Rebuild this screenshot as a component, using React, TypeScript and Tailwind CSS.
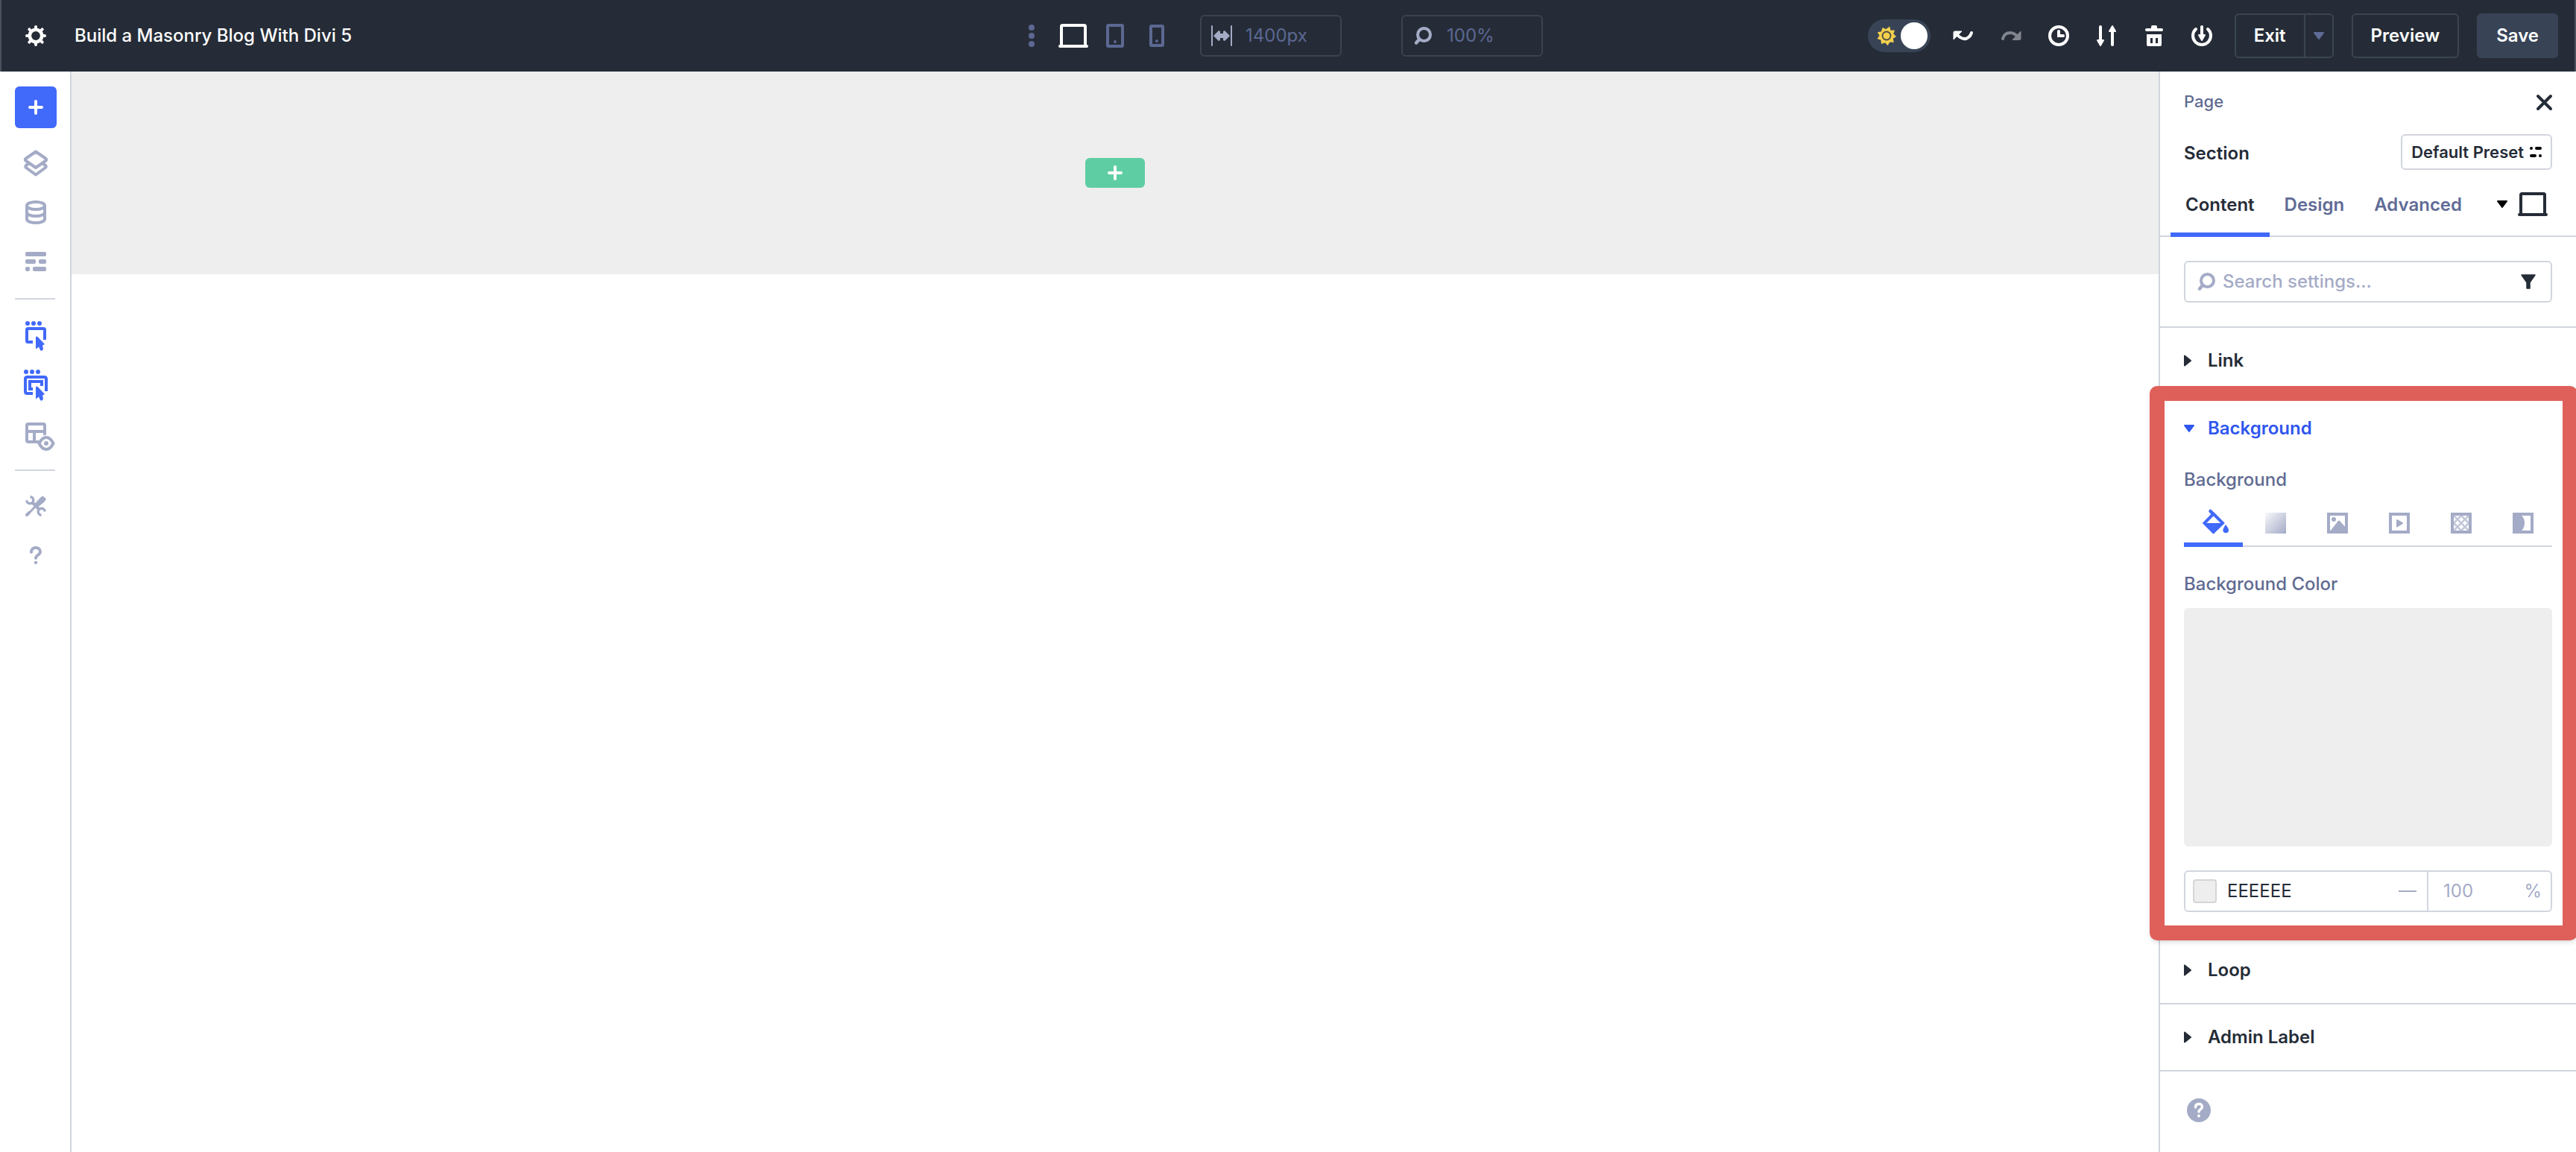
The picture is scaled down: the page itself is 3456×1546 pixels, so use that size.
import { ReactNode, useState } from "react";

interface IIconProps {
  w: number;
  h: number;
  className?: string;
  children: ReactNode;
}

const Icon = ({ w, h, className = "", children }: IIconProps) => (
  <svg
    width={w}
    height={h}
    viewBox={`0 0 ${w} ${h}`}
    fill="none"
    className={`shrink-0 overflow-visible ${className}`}
    aria-hidden="true"
  >
    {children}
  </svg>
);

const PlusIcon = () => (
  <Icon w={20} h={20}>
    <path d="M10 2v16M2 10h16" stroke="currentColor" strokeWidth="4" strokeLinecap="round" />
  </Icon>
);

const GearIcon = () => (
  <Icon w={28} h={28}>
    <circle cx="14" cy="14" r="8.2" stroke="currentColor" strokeWidth="4.6" />
    <path
      d="M14 2v3M14 23v3M2 14h3M23 14h3M5.3 5.3l2 2M20.7 20.7l2 2M5.3 22.7l2-2M20.7 7.3l2-2"
      stroke="currentColor"
      strokeWidth="4"
      strokeLinecap="round"
    />
  </Icon>
);

const LaptopIcon = () => (
  <Icon w={40} h={32}>
    <path d="M4 29V3.500Q4 2 5.500 2h29Q36 2 36 3.500V29" stroke="currentColor" strokeWidth="4" />
    <path d="M2 30h36" stroke="currentColor" strokeWidth="4" strokeLinecap="round" />
  </Icon>
);

const SearchIcon = () => (
  <Icon w={24} h={26}>
    <circle cx="13.500" cy="11.500" r="8.500" stroke="currentColor" strokeWidth="4" />
    <path d="M7 18l-4 4.500" stroke="currentColor" strokeWidth="4.500" strokeLinecap="round" />
  </Icon>
);

const CaretDown = () => (
  <Icon w={14} h={10}>
    <path d="M1 1h12L7 9z" fill="currentColor" stroke="currentColor" strokeWidth="2" strokeLinejoin="round" />
  </Icon>
);

const CaretRight = () => (
  <Icon w={10} h={16}>
    <path d="M1 1.500v13L9 8z" fill="currentColor" stroke="currentColor" strokeWidth="2" strokeLinejoin="round" />
  </Icon>
);

const LayersIcon = () => (
  <Icon w={32} h={36}>
    <path d="M16 2.500L29 11.500Q31.500 13 29 15L16 24 3 15Q.500 13 3 11.500z" stroke="currentColor" strokeWidth="4" strokeLinejoin="round" />
    <path d="M8 17.500l-5 3.500Q1.500 22.500 3 24l13 9.500L29 24Q30.500 22.500 29 21l-5-3.500" stroke="currentColor" strokeWidth="4" strokeLinejoin="round" />
  </Icon>
);

const DatabaseIcon = () => (
  <Icon w={28} h={32}>
    <ellipse cx="14" cy="7" rx="12" ry="5" stroke="currentColor" strokeWidth="4" />
    <path d="M2 7v18c0 3 5.500 5 12 5s12-2 12-5V7M2 16c0 3 5.500 5 12 5s12-2 12-5" stroke="currentColor" strokeWidth="4" />
  </Icon>
);

const RowsIcon = () => (
  <Icon w={28} h={26}>
    <g fill="currentColor">
      <rect width="28" height="6" rx="2" />
      <rect y="10" width="14" height="6" rx="2" />
      <rect x="18" y="10" width="10" height="6" rx="2" />
      <rect y="20" width="6" height="6" rx="2" />
      <rect x="10" y="20" width="18" height="6" rx="2" />
    </g>
  </Icon>
);

const SelectIcon = () => (
  <Icon w={28} h={40}>
    <g fill="currentColor">
      <circle cx="3" cy="3" r="3" />
      <circle cx="11" cy="3" r="3" />
      <circle cx="19" cy="3" r="3" />
      <path d="M14 22c0-1.800 1.500-2 2.500-1L26 31l-3 1.500 1 5q-2 3.500-4 1.500l-2-4.500-4 3z" />
    </g>
    <path d="M10 28H3.500Q2 28 2 26.500v-15Q2 10 3.500 10h21Q26 10 26 11.500V25" stroke="currentColor" strokeWidth="4" />
  </Icon>
);

const MultiSelectIcon = () => (
  <Icon w={32} h={42}>
    <g fill="currentColor">
      <circle cx="3" cy="3" r="3" />
      <circle cx="11" cy="3" r="3" />
      <circle cx="19" cy="3" r="3" />
      <path d="M16 24c0-1.800 1.500-2 2.500-1L28 33l-3 1.500 1 5q-2 3.500-4 1.500l-2-4.500-4 3z" />
    </g>
    <path d="M12 32H4.500Q2 32 2 29.500v-17Q2 10 4.500 10h23Q30 10 30 12.500V29" stroke="currentColor" strokeWidth="4" />
    <path d="M12 26H8V16h16v6" stroke="currentColor" strokeWidth="4" />
  </Icon>
);

const WireframeIcon = () => (
  <Icon w={28} h={32}>
    <path d="M18 26H4Q2 26 2 24V4Q2 2 4 2h20Q26 2 26 4v13M2 12h24M12 12v14" stroke="currentColor" strokeWidth="4" />
    <path d="M18.500 28q4-8 9.500-8t9.500 8q-4 8-9.500 8t-9.500-8z" fill="#fff" stroke="currentColor" strokeWidth="4" strokeLinejoin="round" />
    <circle cx="28" cy="28" r="3" fill="currentColor" />
  </Icon>
);

const ToolsIcon = () => (
  <Icon w={28} h={28}>
    <path d="M23.500 .500L28 4.500 26 8 16.500 16 12 11.500 20.500 2.500z" fill="currentColor" />
    <path d="M14 14L3 25.500" stroke="currentColor" strokeWidth="3" strokeLinecap="round" />
    <path d="M5 23l-3 3" stroke="currentColor" strokeWidth="4" strokeLinecap="round" />
    <path d="M9 9l10 10" stroke="currentColor" strokeWidth="4" />
    <path d="M6.500 1.800a4.500 4.500 0 1 1-4.700 4.700M21.500 26.200a4.500 4.500 0 1 1 4.700-4.700" stroke="currentColor" strokeWidth="3.400" />
  </Icon>
);

const QuestionIcon = () => (
  <Icon w={16} h={24}>
    <path d="M2 8c0-4 2.800-6 6-6s6 2.200 6 5.500c0 4-6 4.500-6 8.500" stroke="currentColor" strokeWidth="4" strokeLinecap="round" />
    <circle cx="8" cy="22" r="2.200" fill="currentColor" />
  </Icon>
);

const SunIcon = () => (
  <Icon w={26} h={26}>
    <path
      d="M13 3.500L17.300 .500 18.500 5.800 24 5.500 22.300 10.600 26 14 21.800 16.800 22.800 22 17.500 21.600 14.500 26 11 22.200 6 24 5.500 18.800 .500 17 3.500 12.700 .800 8.200 6 7.300 7.500 2 12 4z"
      fill="#f3d04e"
    />
    <circle cx="13" cy="13" r="5.500" stroke="#4a4c42" strokeWidth="1.800" />
  </Icon>
);

const ToolbarButton = ({ label, children }: { label: string; children: ReactNode }) => (
  <button className="w-8 h-8 flex items-center justify-center" aria-label={label}>
    {children}
  </button>
);

const SideButton = ({
  label,
  active = false,
  children,
}: {
  label: string;
  active?: boolean;
  children: ReactNode;
}) => (
  <button
    className={`w-full h-[66px] flex items-center justify-center ${
      active ? "text-[#4169fa]" : "text-[#a4abc6]"
    }`}
    aria-label={label}
  >
    {children}
  </button>
);

const Header = () => (
  <header className="h-24 grid grid-cols-[1fr_auto_1fr] items-center px-[22px] bg-[#252c37] border-x-2 border-[#4b525e] text-white">
    <div className="flex items-center gap-[38px] pl-2.5">
      <button aria-label="Settings">
        <GearIcon />
      </button>
      <h1 className="text-2xl font-medium">Build a Masonry Blog With Divi 5</h1>
    </div>

    <div className="flex items-center text-[#5c6892] pr-1.5">
      <button className="mr-8" aria-label="More views">
        <Icon w={8} h={26}>
          <g fill="currentColor">
            <circle cx="4" cy="2" r="4" />
            <circle cx="4" cy="13" r="4" />
            <circle cx="4" cy="24" r="4" />
          </g>
        </Icon>
      </button>
      <button className="mr-6 text-white" aria-label="Desktop">
        <LaptopIcon />
      </button>
      <button className="mr-[34px]" aria-label="Tablet">
        <Icon w={24} h={32}>
          <rect x="2" y="2" width="20" height="28" rx="1" stroke="currentColor" strokeWidth="4" />
          <circle cx="12" cy="24" r="2" fill="currentColor" />
        </Icon>
      </button>
      <button className="mr-12" aria-label="Phone">
        <Icon w={20} h={30}>
          <rect x="2" y="2" width="16" height="26" rx="1" stroke="currentColor" strokeWidth="4" />
          <circle cx="10" cy="22" r="2" fill="currentColor" />
        </Icon>
      </button>
      <label className="w-[190px] h-14 mr-20 flex items-center gap-[18px] pl-[13px] border-2 border-[#3b4350] rounded-md">
        <Icon w={28} h={28} className="text-[#a4abc6]">
          <path d="M1 1v26M27 1v26" stroke="currentColor" strokeWidth="2" strokeLinecap="round" />
          <path d="M3 14l7-7 2 1v3h4V8l2-1 7 7-7 7-2-1v-3h-4v3l-2 1z" fill="currentColor" />
        </Icon>
        <input className="w-full min-w-0 text-2xl outline-none" defaultValue="1400px" aria-label="Canvas width" />
      </label>
      <label className="w-[190px] h-14 flex items-center gap-5 pl-[15px] border-2 border-[#3b4350] rounded-md">
        <span className="text-[#a4abc6]">
          <SearchIcon />
        </span>
        <input className="w-full min-w-0 text-2xl outline-none" defaultValue="100%" aria-label="Zoom" />
      </label>
    </div>

    <div className="flex items-center justify-end gap-7">
      <button
        className="w-[84px] h-11 flex items-center justify-between pl-3 pr-1 rounded-full bg-[#384456]"
        role="switch"
        aria-checked="true"
        aria-label="Light mode"
      >
        <SunIcon />
        <span className="w-9 h-9 rounded-full bg-white" />
      </button>
      <div className="flex items-center gap-8">
        <ToolbarButton label="Undo">
          <Icon w={28} h={14}>
            <path d="M4 4q10 11 17 5 3-2 4-6" stroke="currentColor" strokeWidth="4" strokeLinecap="round" />
            <path d="M1 12V2.500Q1 1 2.500 1H12L1 12z" fill="currentColor" stroke="currentColor" strokeWidth="1" strokeLinejoin="round" />
          </Icon>
        </ToolbarButton>
        <ToolbarButton label="Redo">
          <Icon w={28} h={14} className="text-[#81858e]">
            <path d="M3 11q2-8 10-8 6 0 10 6" stroke="currentColor" strokeWidth="4" strokeLinecap="round" />
            <path d="M27 1v10q0 1.500-1.500 1.500H16L27 1z" fill="currentColor" stroke="currentColor" strokeWidth="1" strokeLinejoin="round" />
          </Icon>
        </ToolbarButton>
        <ToolbarButton label="History">
          <Icon w={28} h={28}>
            <circle cx="14" cy="14" r="12" stroke="currentColor" strokeWidth="4" />
            <path d="M14 8v6h6" stroke="currentColor" strokeWidth="4" strokeLinecap="round" />
          </Icon>
        </ToolbarButton>
        <ToolbarButton label="Portability">
          <Icon w={26} h={28}>
            <path d="M5 2v20M21 8v18" stroke="currentColor" strokeWidth="4" strokeLinecap="round" />
            <path d="M1 20h8l-4 7zM17 8h8l-4-7z" fill="currentColor" stroke="currentColor" strokeWidth="2" strokeLinejoin="round" />
          </Icon>
        </ToolbarButton>
        <ToolbarButton label="Clear layout">
          <Icon w={24} h={28}>
            <path d="M2 6h20" stroke="currentColor" strokeWidth="4" strokeLinecap="round" />
            <path d="M8 5V2q0-2 2-2h4q2 0 2 2v3z" fill="currentColor" />
            <path d="M2 12h20v14q0 2-2 2H4q-2 0-2-2zM7 17v7h3v-7zM14 17v7h3v-7z" fill="currentColor" fillRule="evenodd" />
          </Icon>
        </ToolbarButton>
        <ToolbarButton label="Save to library">
          <Icon w={28} h={28}>
            <path d="M6 5a12 12 0 1 0 16 0" stroke="currentColor" strokeWidth="4" strokeLinecap="round" />
            <path d="M14 2v14" stroke="currentColor" strokeWidth="4" strokeLinecap="round" />
            <path d="M10 13h8l-4 7z" fill="currentColor" stroke="currentColor" strokeWidth="2" strokeLinejoin="round" />
          </Icon>
        </ToolbarButton>
      </div>
      <div className="flex items-center gap-6 text-2xl font-semibold">
        <div className="h-[60px] flex border-2 border-[#3b4552] rounded-md">
          <button className="px-6">Exit</button>
          <button className="w-[38px] flex items-center justify-center border-l-2 border-[#3b4552] text-[#5f6b96]" aria-label="Exit options">
            <CaretDown />
          </button>
        </div>
        <button className="h-[60px] px-6 border-2 border-[#3b4552] rounded-md">Preview</button>
        <button className="h-[60px] px-[26px] bg-[#384456] rounded-md">Save</button>
      </div>
    </div>
  </header>
);

const Sidebar = () => (
  <aside className="w-24 shrink-0 pl-5 pt-5 border-r-2 border-[#d1d5de]">
    <div className="w-14 flex flex-col items-center">
      <button className="w-14 h-14 mb-3.5 flex items-center justify-center bg-[#4169fa] text-white rounded-md" aria-label="Add">
        <PlusIcon />
      </button>
      <SideButton label="Layers">
        <LayersIcon />
      </SideButton>
      <SideButton label="Variables">
        <DatabaseIcon />
      </SideButton>
      <SideButton label="Presets">
        <RowsIcon />
      </SideButton>
      <hr className="w-[54px] self-start my-4 border-t-2 border-[#d1d5de]" />
      <SideButton label="Select" active>
        <SelectIcon />
      </SideButton>
      <SideButton label="Multi select" active>
        <MultiSelectIcon />
      </SideButton>
      <SideButton label="Wireframe">
        <WireframeIcon />
      </SideButton>
      <hr className="w-[54px] self-start my-3.5 border-t-2 border-[#d1d5de]" />
      <SideButton label="Tools">
        <ToolsIcon />
      </SideButton>
      <SideButton label="Help">
        <QuestionIcon />
      </SideButton>
    </div>
  </aside>
);

const backgroundTabs = [
  {
    label: "Color",
    icon: (
      <Icon w={30} h={36}>
        <path d="M10.500 2l4 4" stroke="currentColor" strokeWidth="4.500" strokeLinecap="round" />
        <path d="M14.500 5.500L27 18 14.500 30 2.500 18z" stroke="currentColor" strokeWidth="4" />
        <path d="M2 18h25L14.500 30z" fill="currentColor" />
        <path d="M31 20q4 5 4 7.500a3.800 3.800 0 0 1-7.600 0q0-2.500 3.600-7.500z" fill="currentColor" />
      </Icon>
    ),
  },
  {
    label: "Gradient",
    icon: <span className="w-7 h-7 bg-linear-to-br from-[#f8f9fb] to-[#a4abc6]" />,
  },
  {
    label: "Image",
    icon: (
      <Icon w={28} h={28}>
        <rect x="2" y="2" width="24" height="24" stroke="currentColor" strokeWidth="4" />
        <circle cx="9" cy="9" r="3" fill="currentColor" />
        <path d="M4 25l11-14q1-1 2 0l8 9v6z" fill="currentColor" />
      </Icon>
    ),
  },
  {
    label: "Video",
    icon: (
      <Icon w={28} h={28}>
        <rect x="2" y="2" width="24" height="24" stroke="currentColor" strokeWidth="4" />
        <path d="M11 10v8.500l7-4.300z" fill="currentColor" stroke="currentColor" strokeWidth="2" strokeLinejoin="round" />
      </Icon>
    ),
  },
  {
    label: "Pattern",
    icon: (
      <Icon w={28} h={28}>
        <path
          d="M4 14L14 4M4 24L24 4M14 24l10-10M14 4l10 10M4 4l20 20M4 14l10 10"
          stroke="#c3c8d9"
          strokeWidth="2.500"
        />
        <rect x="2" y="2" width="24" height="24" stroke="currentColor" strokeWidth="4" />
      </Icon>
    ),
  },
  {
    label: "Mask",
    icon: (
      <Icon w={28} h={28}>
        <rect x="2" y="2" width="24" height="24" stroke="currentColor" strokeWidth="4" />
        <path d="M3 3h8q5 4 5 11t-5 11H3z" fill="currentColor" />
      </Icon>
    ),
  },
];

const GroupRow = ({ title }: { title: string }) => (
  <button className="w-full h-[90px] px-8 flex items-center gap-[22px] border-b-2 border-[#d1d5de] text-2xl font-semibold">
    <CaretRight />
    {title}
  </button>
);

const BackgroundGroup = () => {
  const [activeTab, setActiveTab] = useState<string>("Color");

  return (
    <section className="relative px-8 pb-8 border-b-2 border-[#d1d5de] text-2xl">
      <button className="w-full h-[90px] flex items-center gap-[18px] font-semibold text-[#2f57ed]">
        <CaretDown />
        Background
      </button>

      <h3 className="mt-2.5 leading-7 font-medium text-[#606b91]">Background</h3>
      <div className="mt-[18px] h-[58px] flex gap-1 border-b-2 border-[#d1d5de]">
        {backgroundTabs.map((tab) => (
          <button
            key={tab.label}
            className={`flex-1 -mb-0.5 flex items-center justify-center border-b-6 ${
              activeTab === tab.label
                ? "border-[#4169fa] text-[#4169fa]"
                : "border-transparent text-[#a4abc6]"
            }`}
            onClick={() => setActiveTab(tab.label)}
            aria-label={tab.label}
          >
            {tab.icon}
          </button>
        ))}
      </div>

      <h3 className="mt-9 leading-7 font-medium text-[#606b91]">Background Color</h3>
      <div className="mt-[18px] h-80 rounded-md bg-[#eeeeee]" />
      <div className="mt-8 h-14 flex border-2 border-[#d1d5de] rounded-md">
        <label className="flex-1 flex items-center gap-3.5 pl-2.5 pr-3.5">
          <span className="w-8 h-8 shrink-0 border-2 border-[#d4d5d8] rounded-sm bg-[#eeeeee]" />
          <input className="w-full min-w-0 outline-none" defaultValue="EEEEEE" aria-label="Color value" />
          <span className="w-6 h-0.5 shrink-0 bg-[#a4abc6]" />
        </label>
        <label className="w-[166px] flex items-center pl-5 pr-3 border-l-2 border-[#d1d5de] text-[#a4abc6]">
          <input className="w-full min-w-0 outline-none" defaultValue="100" aria-label="Opacity" />%
        </label>
      </div>

      {/* Highlight frame around the open group */}
      <div className="absolute pointer-events-none -top-3 -bottom-1.5 -left-3.5 -right-0.5 border-20 border-[#df605a] rounded-[10px] shadow-md" />
    </section>
  );
};

const settingsTabs = ["Content", "Design", "Advanced"];

const SettingsPanel = () => {
  const [activeTab, setActiveTab] = useState<string>("Content");

  return (
    <aside className="w-[560px] shrink-0 border-l-2 border-[#d1d5de] text-[#252c37]">
      <div className="px-8 pt-6.5">
        <div className="h-7 flex items-center justify-between">
          <a href="#page" className="text-[22px] font-medium text-[#606b91]">
            Page
          </a>
          <button className="pt-0.5" aria-label="Close">
            <Icon w={22} h={22}>
              <path d="M3 3l17 17M20 3L3 20" stroke="currentColor" strokeWidth="4" strokeLinecap="round" />
            </Icon>
          </button>
        </div>
        <div className="mt-[30px] flex items-center justify-between">
          <h2 className="pt-1 text-2xl font-semibold">Section</h2>
          <button className="h-12 px-3 flex items-center gap-2 border-2 border-[#d1d5de] rounded-md text-[22px] font-semibold">
            Default Preset
            <Icon w={16} h={14} className="text-black">
              <path d="M2 2h0M9 2h5M2 12h5M14 12h0" stroke="currentColor" strokeWidth="4" strokeLinecap="round" />
            </Icon>
          </button>
        </div>
      </div>

      <nav className="h-[90px] pl-3.5 pr-[38px] flex border-b-2 border-[#d1d5de] text-2xl font-semibold">
        {settingsTabs.map((tab) => (
          <button
            key={tab}
            className={`-mb-0.5 px-5 pt-2.5 border-b-6 ${
              activeTab === tab ? "border-[#4169fa]" : "border-transparent text-[#606b96]"
            }`}
            onClick={() => setActiveTab(tab)}
          >
            {tab}
          </button>
        ))}
        <button className="ml-auto pt-1 flex items-center gap-3.5" aria-label="Responsive view">
          <span className="text-black">
            <CaretDown />
          </span>
          <LaptopIcon />
        </button>
      </nav>

      <div className="px-8 py-8 border-b-2 border-[#d1d5de]">
        <label className="h-14 flex items-center gap-2.5 pl-4 pr-5 border-2 border-[#d1d5de] rounded-md">
          <span className="text-[#a4abc6]">
            <SearchIcon />
          </span>
          <input
            className="w-full min-w-0 text-2xl font-medium outline-none placeholder:text-[#a4abc6]"
            placeholder="Search settings..."
            aria-label="Search settings"
          />
          <Icon w={20} h={20}>
            <path d="M1 1h18l-7 10v8H8v-8z" fill="currentColor" stroke="currentColor" strokeWidth="1.500" strokeLinejoin="round" />
          </Icon>
        </label>
      </div>

      <GroupRow title="Link" />
      <BackgroundGroup />
      <GroupRow title="Loop" />
      <GroupRow title="Admin Label" />

      <button className="ml-9 mt-9 text-[#a4abc6]" aria-label="Help">
        <Icon w={32} h={32}>
          <circle cx="16" cy="16" r="16" fill="currentColor" />
          <path d="M11.500 12c0-3 2-4.500 4.500-4.500s4.500 1.500 4.500 4c0 3-4.500 3.200-4.500 6.500" stroke="#fff" strokeWidth="3.400" strokeLinecap="round" />
          <circle cx="16" cy="23.500" r="2" fill="#fff" />
        </Icon>
      </button>
    </aside>
  );
};

const App = () => {
  return (
    <div className="min-h-screen flex flex-col overflow-x-clip bg-white font-['Inter',sans-serif]">
      <Header />
      <div className="flex flex-1">
        <Sidebar />
        <main className="flex-1">
          <div className="h-[272px] flex items-center justify-center bg-[#eeeeee]">
            <button className="w-20 h-10 flex items-center justify-center bg-[#5fcda4] text-white rounded-md" aria-label="Add row">
              <PlusIcon />
            </button>
          </div>
        </main>
        <SettingsPanel />
      </div>
    </div>
  );
};

export default App;
